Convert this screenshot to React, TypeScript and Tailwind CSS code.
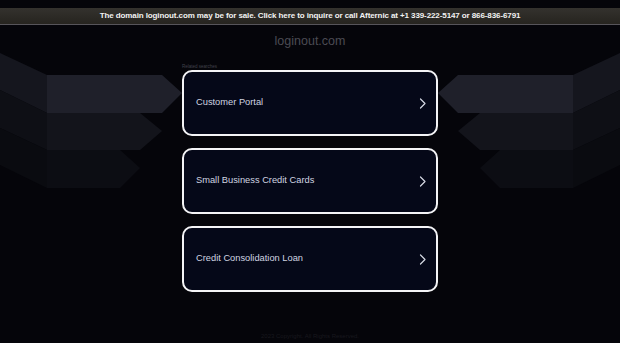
import React from "react";

const searches = [
  "Customer Portal",
  "Small Business Credit Cards",
  "Credit Consolidation Loan",
];

// decorative chevron bands behind the cards (left side, mirrored for right)
const bands = [
  { back: "0,53 47,75 47,113 0,90", front: "47,75 162,75 182,93 162,113 47,113", b: "#15161e", f: "#1f202a" },
  { back: "0,90 47,113 47,150 0,128", front: "47,113 140,113 162,131 140,150 47,150", b: "#0e0f15", f: "#13141b" },
  { back: "0,128 47,150 47,188 0,165", front: "47,150 120,150 140,168 120,188 47,188", b: "#0a0b10", f: "#0c0d13" },
];

const Backdrop = () => (
  <svg
    className="absolute inset-0 pointer-events-none"
    width="620"
    height="343"
    viewBox="0 0 620 343"
  >
    {bands.map((band, i) => (
      <g key={i}>
        <polygon points={band.back} fill={band.b} />
        <polygon points={band.front} fill={band.f} />
        <g transform="translate(620,0) scale(-1,1)">
          <polygon points={band.back} fill={band.b} />
          <polygon points={band.front} fill={band.f} />
        </g>
      </g>
    ))}
  </svg>
);

const Chevron = () => (
  <svg width="7" height="11" viewBox="0 0 7 11" fill="none">
    <polyline
      points="1.5,1 6,5.5 1.5,10"
      stroke="#d6d9e3"
      strokeWidth="1.2"
      strokeLinecap="round"
      strokeLinejoin="round"
    />
  </svg>
);

const App = () => {
  return (
    <div
      className="relative w-[620px] h-[343px] overflow-hidden bg-[#05050a]"
      style={{ fontFamily: '"Liberation Sans", Arial, sans-serif' }}
    >
      <Backdrop />

      <div className="relative flex flex-col items-center">
        <div className="mt-2 w-full h-[17px] bg-gradient-to-b from-[#34322e] to-[#26241f] border-b border-[#57555a] flex items-center justify-center">
          <span className="text-[8px] font-bold text-[#f2f2f2] tracking-[-0.1px]">
            The domain loginout.com may be for sale. Click here to inquire or
            call Afternic at +1 339-222-5147 or 866-836-6791
          </span>
        </div>

        <div className="mt-[9px] text-[12.5px] leading-[14px] text-[#4b4b53]">
          loginout.com
        </div>

        <div className="mt-[16px] w-[256px] flex flex-col">
          <div className="text-[4.5px] leading-[6px] text-[#42434c]">
            Related searches
          </div>
          <div className="flex flex-col gap-[12px]">
            {searches.map((s) => (
              <div
                key={s}
                className="h-[66px] rounded-[10px] border-2 border-[#f4f4f6] bg-[#050818] flex items-center justify-between pl-[12px] pr-[10px]"
              >
                <span className="text-[9.3px] text-[#d0d4e1]">{s}</span>
                <Chevron />
              </div>
            ))}
          </div>
        </div>

        <div className="mt-[40px] text-[6px] text-[#18181e]">
          2023 Copyright. All Rights Reserved.
        </div>
      </div>
    </div>
  );
};

export default App;
